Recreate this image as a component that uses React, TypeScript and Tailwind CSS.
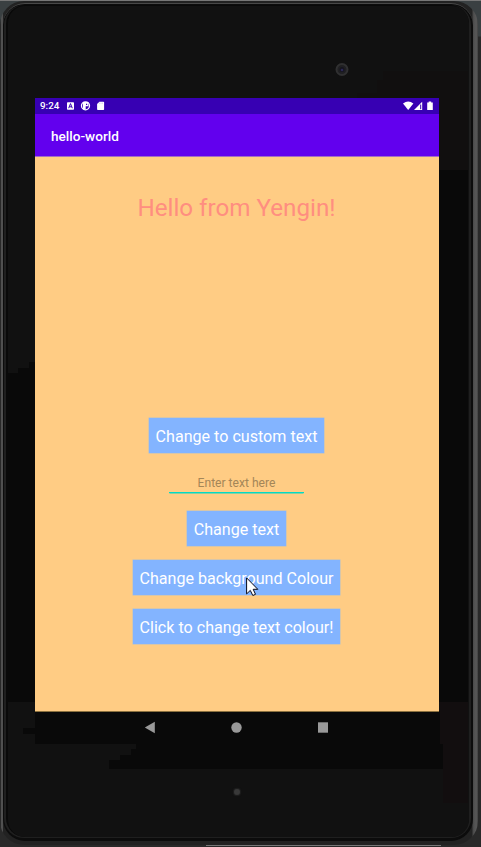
import type { ReactNode } from "react";

function BezelShading() {
  return (
    <svg className="pointer-events-none absolute left-0 top-0" width="481" height="847" viewBox="0 0 481 847" shapeRendering="crispEdges">
      <path d="M383 71h85v99h-29V98h-82v-5h20V80h6z" fill="#110f0f" />
      <path d="M439 170h29v532h-29z" fill="#090909" />
      <path d="M8 373h10v-5h11v-6h6v340H8z" fill="#090909" />
      <path d="M35 711h405v33h3v25H109v-9h11v-5h11v-6h5v-5H35v-10h-12v-6h12z" fill="#090909" />
      <path d="M440 702h28v101h-25v-59h-3z" fill="#120e0f" />
    </svg>
  );
}

function StatusBar() {
  return (
    <div className="flex h-4 items-center bg-[#3700b3] pl-[5px] pr-[5px] text-white">
      <span className="w-[26px] whitespace-nowrap text-[9.8px] font-medium leading-4">9:24</span>
      <svg className="h-4 w-[42px]" viewBox="0 0 42 16">
        <rect x="1" y="4.3" width="7" height="7.4" rx=".7" fill="#fff" />
        <path d="M2.7 10.2 4.5 5.6l1.8 4.6M3.3 8.8h2.4" fill="none" stroke="#3700b3" strokeWidth="1" />
        <circle cx="19.5" cy="7.8" r="4" fill="none" stroke="#fff" strokeWidth="1.3" />
        <path d="M17 4h5.4v4.3h-2.7V11.5H17z" fill="#fff" />
        <path d="M20 5.7h1.2v1.2H20z" fill="#3700b3" />
        <path d="M33.4 3.7h4q.7 0 .7.7v6.8q0 .7-.7.7h-5.6q-.7 0-.7-.7V6z" fill="#fff" />
        <path d="M33.4 4.6v1.3M35 4.6v1.3M36.6 4.6v1.3" stroke="#b9a5e4" strokeWidth=".5" />
      </svg>
      <svg className="ml-auto h-4 w-[31px]" viewBox="0 0 31 16">
        <path d="M0 5.4Q5.2 1.5 10.4 5.4L5.2 12z" fill="#fff" />
        <path d="M11 12 19.2 3.7V12z" fill="#fff" />
        <path d="M17.7 6.5v4.7" stroke="#3700b3" strokeWidth="1" />
        <path d="M25.7 3.4h2.5v1h1.6V12h-5.6V4.4h1.5z" fill="#fff" />
      </svg>
    </div>
  );
}

function ActionButton({ width, className, children }: { width: string; className: string; children: ReactNode }) {
  return (
    <button className={`flex h-[35px] items-center justify-center whitespace-nowrap bg-[#83b4ff] pt-[3px] text-[16.1px] leading-5 text-white shadow-[0_0_0_0.5px_#b0bfd0] ${width} ${className}`}>
      {children}
    </button>
  );
}

function Cursor() {
  return (
    <svg className="absolute left-[246px] top-[577px]" width="14" height="20" viewBox="0 0 14 20">
      <path d="M.6.9v16l3.7-3.5 2.5 5.1 2.7-1.2-2.3-5h4.6z" fill="#fff" stroke="#080818" strokeWidth="1" />
    </svg>
  );
}

export default function App() {
  return (
    <div className="relative h-[847px] w-[481px] overflow-hidden bg-[linear-gradient(#3a4042_0px,#3a4042_36px,#292929_37px)] font-['Roboto','Liberation_Sans',sans-serif]">
      <div className="h-px w-full bg-[#777]" />
      <div className="h-[844px] w-[478px] rounded-[24px] bg-[linear-gradient(90deg,#292929_0px,#292929_1px,#505050_1px,#505050_3px,#222_3px,#222_472px,#484848_473px,#555_475px,#555_477px,#3a3a3a_478px)] pb-[4px] pl-[3px] pr-[5px] pt-[2px]">
        <div className="h-full w-full rounded-[22px] border-t border-[#484848] bg-[#0c0c0c] pb-[3px] pl-px pr-[2px] pt-px">
          <div className="h-full w-full rounded-[20px] bg-[#1f1f1f] pb-px pl-[2px] pr-[2px]">
            <div className="h-full w-full rounded-[19px] bg-[#090909] pb-0 pl-[2px] pt-px">
              <div className="h-full w-full rounded-[17px] bg-[#111]" />
            </div>
          </div>
        </div>
      </div>
      <BezelShading />
      <div className="absolute left-[206px] top-[845px] h-px w-[235px] bg-[#777]" />
      <svg className="absolute left-[334px] top-[62px]" width="16" height="16" viewBox="0 0 16 16">
        <circle cx="8" cy="7.5" r="5.5" fill="#202022" stroke="#303031" strokeWidth="2" />
        <circle cx="8" cy="7.5" r="2.5" fill="#16151f" />
        <circle cx="8" cy="8" r="1.3" fill="#2b2855" />
      </svg>
      <main className="absolute left-[35px] top-[98px] flex h-[646px] w-[404px] flex-col">
        <StatusBar />
        <header className="flex h-[43px] items-center border-b border-[#a36bc4] bg-[#6200ee] pl-4 pt-px text-[13.6px] font-medium leading-5 text-white">
          hello-world
        </header>
        <section className="flex h-[555px] flex-col items-center border-b border-[#8b713f] bg-[#ffcc84] pr-px">
          <h1 className="mt-[35px] h-8 whitespace-nowrap text-[24.2px] font-normal leading-8 text-[#ff8e80]">Hello from Yengin!</h1>
          <ActionButton width="w-[175px]" className="mt-[194px]">Change to custom text</ActionButton>
          <div className="mt-[21px] flex h-[19px] w-[135px] items-center justify-center border-b border-[#03dac5] text-[12.1px] leading-4 text-[#a48658] shadow-[0_1px_0_-0.5px_#03dac5]">
            Enter text here
          </div>
          <ActionButton width="w-[99px]" className="mt-[18px]">Change text</ActionButton>
          <ActionButton width="w-[207px]" className="mt-[14px]">Change background Colour</ActionButton>
          <ActionButton width="w-[207px]" className="mt-[14px]">Click to change text colour!</ActionButton>
        </section>
        <nav className="flex h-8 items-center bg-[#090909] pl-[109px]">
          <svg width="186" height="32" viewBox="0 0 186 32" fill="#999">
            <path d="m.8 15.5 10-5.7v11.4z" />
            <circle cx="92.5" cy="15.5" r="5.2" />
            <path d="M174 10.3h10v10.4h-10z" />
          </svg>
        </nav>
      </main>
      <div className="absolute left-[234px] top-[789px] size-[6px] rounded-full bg-[#393939] shadow-[0_0_1px_1px_#202020]" />
      <Cursor />
    </div>
  );
}
